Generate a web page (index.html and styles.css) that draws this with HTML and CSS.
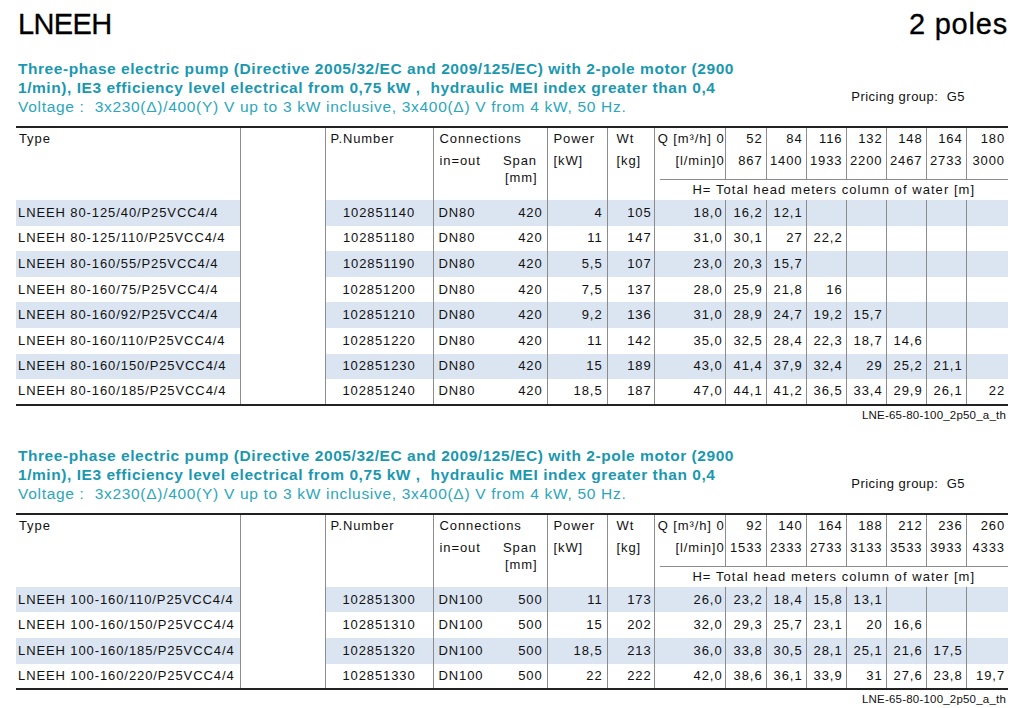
FILE: index.html
```html
<!DOCTYPE html>
<html lang="en">
<head>
<meta charset="utf-8">
<title>LNEEH 2 poles</title>
<link rel="stylesheet" href="styles.css">
</head>
<body>
<div class="page">
  <header class="top">
    <h1 class="series">LNEEH</h1>
    <div class="poles">2 poles</div>
  </header>

  <section class="block first">
    <div class="intro">
      <div class="desc">
        <p class="d-bold">Three-phase electric pump (Directive 2005/32/EC and 2009/125/EC) with 2-pole motor (2900<br>1/min), IE3 efficiency level electrical from 0,75 kW ,&nbsp; hydraulic MEI index greater than 0,4</p>
        <p class="d-volt">Voltage :&nbsp; 3x230(Δ)/400(Y) V up to 3 kW inclusive, 3x400(Δ) V from 4 kW, 50 Hz.</p>
      </div>
      <div class="pricing">Pricing group:&nbsp; G5</div>
    </div>
    <table class="grid">
      <colgroup>
        <col class="c-type"><col class="c-blank"><col class="c-pn"><col class="c-io"><col class="c-span"><col class="c-pow"><col class="c-wt"><col class="c-q"><col class="c-v1"><col class="c-v"><col class="c-v"><col class="c-v"><col class="c-v"><col class="c-v"><col class="c-vl">
      </colgroup>
      <thead>
        <tr class="h1">
          <th class="type" rowspan="3">Type</th>
          <th class="blank" rowspan="3"></th>
          <th class="pn" rowspan="3">P.Number</th>
          <th class="conn" colspan="2">Connections</th>
          <th class="pow" rowspan="3">Power<br>[kW]</th>
          <th class="wt" rowspan="3">Wt<br>[kg]</th>
          <th class="q" rowspan="2">Q [m³/h] 0<br>[l/min]0</th>
          <th class="v" rowspan="2">52<br>867</th>
          <th class="v" rowspan="2">84<br>1400</th>
          <th class="v" rowspan="2">116<br>1933</th>
          <th class="v" rowspan="2">132<br>2200</th>
          <th class="v" rowspan="2">148<br>2467</th>
          <th class="v" rowspan="2">164<br>2733</th>
          <th class="v last" rowspan="2">180<br>3000</th>
        </tr>
        <tr class="h2">
          <th class="io" rowspan="2">in=out</th>
          <th class="span" rowspan="2"><div>Span</div><div class="mm">[mm]</div></th>
        </tr>
        <tr class="h3">
          <th class="h" colspan="8"><div class="hline">H= Total head meters column of water [m]</div></th>
        </tr>
      </thead>
      <tbody>
        <tr class="alt"><td class="type">LNEEH 80-125/40/P25VCC4/4</td><td class="blank"></td><td class="pn">102851140</td><td class="io">DN80</td><td class="span">420</td><td class="pow">4</td><td class="wt">105</td><td class="q">18,0</td><td class="v">16,2</td><td class="v">12,1</td><td class="v"></td><td class="v"></td><td class="v"></td><td class="v"></td><td class="v last"></td></tr>
        <tr><td class="type">LNEEH 80-125/110/P25VCC4/4</td><td class="blank"></td><td class="pn">102851180</td><td class="io">DN80</td><td class="span">420</td><td class="pow">11</td><td class="wt">147</td><td class="q">31,0</td><td class="v">30,1</td><td class="v">27</td><td class="v">22,2</td><td class="v"></td><td class="v"></td><td class="v"></td><td class="v last"></td></tr>
        <tr class="alt"><td class="type">LNEEH 80-160/55/P25VCC4/4</td><td class="blank"></td><td class="pn">102851190</td><td class="io">DN80</td><td class="span">420</td><td class="pow">5,5</td><td class="wt">107</td><td class="q">23,0</td><td class="v">20,3</td><td class="v">15,7</td><td class="v"></td><td class="v"></td><td class="v"></td><td class="v"></td><td class="v last"></td></tr>
        <tr><td class="type">LNEEH 80-160/75/P25VCC4/4</td><td class="blank"></td><td class="pn">102851200</td><td class="io">DN80</td><td class="span">420</td><td class="pow">7,5</td><td class="wt">137</td><td class="q">28,0</td><td class="v">25,9</td><td class="v">21,8</td><td class="v">16</td><td class="v"></td><td class="v"></td><td class="v"></td><td class="v last"></td></tr>
        <tr class="alt"><td class="type">LNEEH 80-160/92/P25VCC4/4</td><td class="blank"></td><td class="pn">102851210</td><td class="io">DN80</td><td class="span">420</td><td class="pow">9,2</td><td class="wt">136</td><td class="q">31,0</td><td class="v">28,9</td><td class="v">24,7</td><td class="v">19,2</td><td class="v">15,7</td><td class="v"></td><td class="v"></td><td class="v last"></td></tr>
        <tr><td class="type">LNEEH 80-160/110/P25VCC4/4</td><td class="blank"></td><td class="pn">102851220</td><td class="io">DN80</td><td class="span">420</td><td class="pow">11</td><td class="wt">142</td><td class="q">35,0</td><td class="v">32,5</td><td class="v">28,4</td><td class="v">22,3</td><td class="v">18,7</td><td class="v">14,6</td><td class="v"></td><td class="v last"></td></tr>
        <tr class="alt"><td class="type">LNEEH 80-160/150/P25VCC4/4</td><td class="blank"></td><td class="pn">102851230</td><td class="io">DN80</td><td class="span">420</td><td class="pow">15</td><td class="wt">189</td><td class="q">43,0</td><td class="v">41,4</td><td class="v">37,9</td><td class="v">32,4</td><td class="v">29</td><td class="v">25,2</td><td class="v">21,1</td><td class="v last"></td></tr>
        <tr><td class="type">LNEEH 80-160/185/P25VCC4/4</td><td class="blank"></td><td class="pn">102851240</td><td class="io">DN80</td><td class="span">420</td><td class="pow">18,5</td><td class="wt">187</td><td class="q">47,0</td><td class="v">44,1</td><td class="v">41,2</td><td class="v">36,5</td><td class="v">33,4</td><td class="v">29,9</td><td class="v">26,1</td><td class="v last">22</td></tr>
      </tbody>
    </table>
    <div class="ref">LNE-65-80-100_2p50_a_th</div>
  </section>

  <section class="block second">
    <div class="intro">
      <div class="desc">
        <p class="d-bold">Three-phase electric pump (Directive 2005/32/EC and 2009/125/EC) with 2-pole motor (2900<br>1/min), IE3 efficiency level electrical from 0,75 kW ,&nbsp; hydraulic MEI index greater than 0,4</p>
        <p class="d-volt">Voltage :&nbsp; 3x230(Δ)/400(Y) V up to 3 kW inclusive, 3x400(Δ) V from 4 kW, 50 Hz.</p>
      </div>
      <div class="pricing">Pricing group:&nbsp; G5</div>
    </div>
    <table class="grid">
      <colgroup>
        <col class="c-type"><col class="c-blank"><col class="c-pn"><col class="c-io"><col class="c-span"><col class="c-pow"><col class="c-wt"><col class="c-q"><col class="c-v1"><col class="c-v"><col class="c-v"><col class="c-v"><col class="c-v"><col class="c-v"><col class="c-vl">
      </colgroup>
      <thead>
        <tr class="h1">
          <th class="type" rowspan="3">Type</th>
          <th class="blank" rowspan="3"></th>
          <th class="pn" rowspan="3">P.Number</th>
          <th class="conn" colspan="2">Connections</th>
          <th class="pow" rowspan="3">Power<br>[kW]</th>
          <th class="wt" rowspan="3">Wt<br>[kg]</th>
          <th class="q" rowspan="2">Q [m³/h] 0<br>[l/min]0</th>
          <th class="v" rowspan="2">92<br>1533</th>
          <th class="v" rowspan="2">140<br>2333</th>
          <th class="v" rowspan="2">164<br>2733</th>
          <th class="v" rowspan="2">188<br>3133</th>
          <th class="v" rowspan="2">212<br>3533</th>
          <th class="v" rowspan="2">236<br>3933</th>
          <th class="v last" rowspan="2">260<br>4333</th>
        </tr>
        <tr class="h2">
          <th class="io" rowspan="2">in=out</th>
          <th class="span" rowspan="2"><div>Span</div><div class="mm">[mm]</div></th>
        </tr>
        <tr class="h3">
          <th class="h" colspan="8"><div class="hline">H= Total head meters column of water [m]</div></th>
        </tr>
      </thead>
      <tbody>
        <tr class="alt"><td class="type">LNEEH 100-160/110/P25VCC4/4</td><td class="blank"></td><td class="pn">102851300</td><td class="io">DN100</td><td class="span">500</td><td class="pow">11</td><td class="wt">173</td><td class="q">26,0</td><td class="v">23,2</td><td class="v">18,4</td><td class="v">15,8</td><td class="v">13,1</td><td class="v"></td><td class="v"></td><td class="v last"></td></tr>
        <tr><td class="type">LNEEH 100-160/150/P25VCC4/4</td><td class="blank"></td><td class="pn">102851310</td><td class="io">DN100</td><td class="span">500</td><td class="pow">15</td><td class="wt">202</td><td class="q">32,0</td><td class="v">29,3</td><td class="v">25,7</td><td class="v">23,1</td><td class="v">20</td><td class="v">16,6</td><td class="v"></td><td class="v last"></td></tr>
        <tr class="alt"><td class="type">LNEEH 100-160/185/P25VCC4/4</td><td class="blank"></td><td class="pn">102851320</td><td class="io">DN100</td><td class="span">500</td><td class="pow">18,5</td><td class="wt">213</td><td class="q">36,0</td><td class="v">33,8</td><td class="v">30,5</td><td class="v">28,1</td><td class="v">25,1</td><td class="v">21,6</td><td class="v">17,5</td><td class="v last"></td></tr>
        <tr><td class="type">LNEEH 100-160/220/P25VCC4/4</td><td class="blank"></td><td class="pn">102851330</td><td class="io">DN100</td><td class="span">500</td><td class="pow">22</td><td class="wt">222</td><td class="q">42,0</td><td class="v">38,6</td><td class="v">36,1</td><td class="v">33,9</td><td class="v">31</td><td class="v">27,6</td><td class="v">23,8</td><td class="v last">19,7</td></tr>
      </tbody>
    </table>
    <div class="ref">LNE-65-80-100_2p50_a_th</div>
  </section>
</div>
</body>
</html>
```

FILE: styles.css
```css
html, body {
  margin: 0;
  padding: 0;
  background: #ffffff;
}

body {
  font-family: "Liberation Sans", Arial, Helvetica, sans-serif;
  color: #111111;
}

.page {
  width: 992px;
  padding: 0 20px 0 16px;
}

/* ---------- page title ---------- */
.top {
  display: flex;
  justify-content: space-between;
  align-items: baseline;
  padding: 7px 0 0 2px;
}

.series {
  margin: 0;
  font-size: 29px;
  font-weight: normal;
  line-height: 34px;
  letter-spacing: -0.6px;
  color: #000;
  -webkit-text-stroke: 0.3px #000;
}

.poles {
  font-size: 29px;
  line-height: 34px;
  letter-spacing: 0.8px;
  color: #000;
  -webkit-text-stroke: 0.3px #000;
}

/* ---------- section intro ---------- */
.intro {
  display: flex;
  justify-content: space-between;
  align-items: flex-end;
  padding-left: 2px;
}

.first .intro {
  margin-top: 18px;
}

.second .intro {
  margin-top: 22px;
}

.desc p {
  margin: 0;
  line-height: 19px;
}

.d-bold {
  font-size: 15.5px;
  font-weight: bold;
  color: #1a98b0;
  letter-spacing: 0.55px;
}

.d-volt {
  font-size: 15.5px;
  color: #2ba6bc;
  letter-spacing: 0.7px;
}

.pricing {
  font-size: 13px;
  line-height: 19px;
  letter-spacing: 0.5px;
  margin: 0 43px 10px 0;
  color: #111;
}

/* ---------- data table ---------- */
.grid {
  margin-top: 10px;
  width: 992px;
  border-collapse: collapse;
  table-layout: fixed;
  border-top: 2px solid #222;
  border-bottom: 2px solid #222;
  font-size: 13px;
  letter-spacing: 0.9px;
}

.c-type  { width: 224px; }
.c-blank { width: 85px; }
.c-pn    { width: 108px; }
.c-io    { width: 64px; }
.c-span  { width: 50px; }
.c-pow   { width: 60px; }
.c-wt    { width: 47px; }
.c-q     { width: 71px; }
.c-v1    { width: 41px; }
.c-v     { width: 40px; }
.c-vl    { width: 42px; }

.grid th,
.grid td {
  padding: 0;
  white-space: nowrap;
  overflow: visible;
  border-right: 1px solid #8c8c8c;
}

.grid th.io,
.grid td.io,
.grid th.last,
.grid td.last,
.grid th.h {
  border-right: none;
}

.grid th {
  font-weight: normal;
  text-align: left;
  vertical-align: top;
  line-height: 22px;
}

.h1 { height: 22px; }
.h2 { height: 29px; }
.h3 { height: 21px; }

.grid th.type { padding-left: 3px; }
.grid th.pn   { padding-left: 5px; }
.grid th.conn { padding-left: 6px; }
.grid th.io   { padding-left: 6px; }
.grid th.span { padding-left: 6px; }
.grid th.pow  { padding-left: 6px; }
.grid th.wt   { padding-left: 9px; }
.grid th.q    { text-align: right; padding-right: 0; }
.grid th.v    { text-align: right; padding-right: 3px; }

.grid th.span .mm {
  line-height: 12px;
  padding-left: 2px;
}

.grid th.h {
  padding: 0;
  vertical-align: top;
}

.hline {
  margin-left: 5px;
  border-top: 1px solid #8c8c8c;
  height: 20px;
  line-height: 20px;
  text-align: center;
  letter-spacing: 1.05px;
}

.grid tbody tr {
  height: 25.6px;
}

.grid td {
  vertical-align: middle;
  line-height: 16px;
  text-align: right;
}

.grid tbody tr.alt td {
  background: #dbe5f1;
}

.grid tbody tr.alt td.blank {
  background: #ffffff;
}

.grid td.type { text-align: left; padding-left: 2px; }
.grid td.pn   { text-align: center; }
.grid td.io   { text-align: left; padding-left: 5px; }
.grid td.span { padding-right: 4px; }
.grid td.pow  { padding-right: 4px; }
.grid td.wt   { padding-right: 2px; }
.grid td.q    { padding-right: 2px; }
.grid td.v    { padding-right: 3px; }

.ref {
  text-align: right;
  font-size: 11.5px;
  line-height: 18px;
  letter-spacing: 0.2px;
  padding-right: 2px;
  color: #111;
}
```
